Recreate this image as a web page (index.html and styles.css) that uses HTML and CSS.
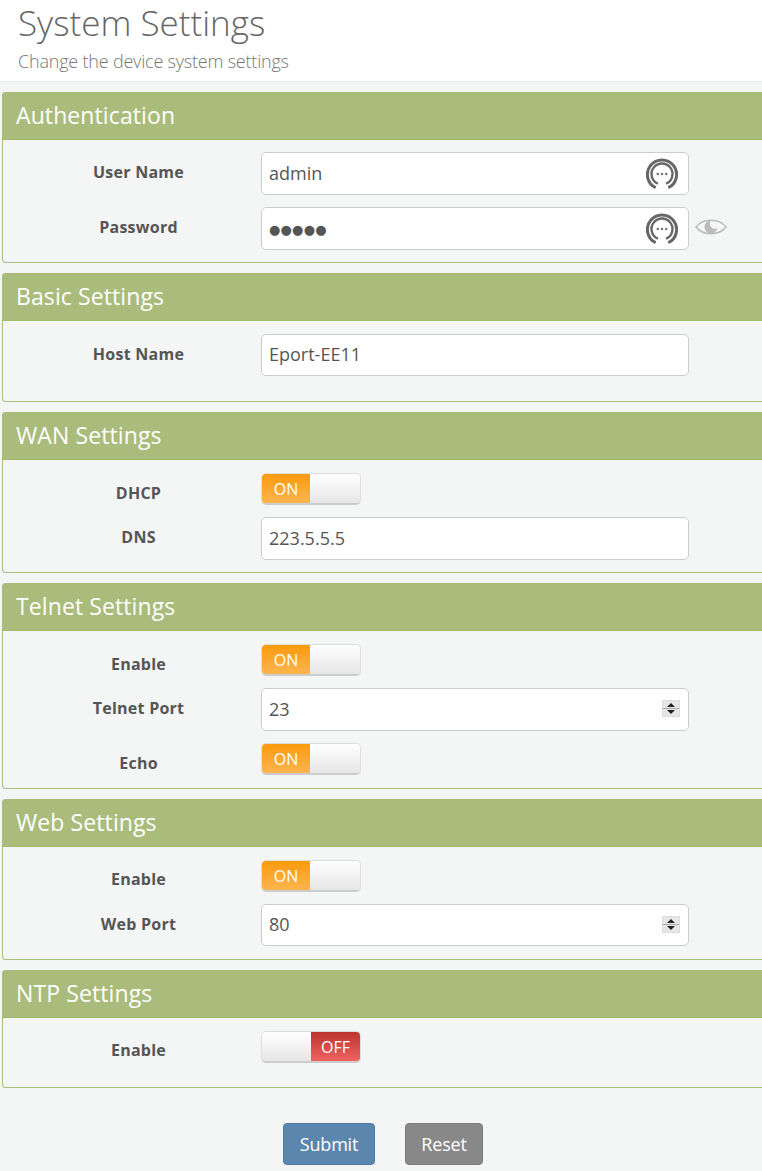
FILE: index.html
```html
<!DOCTYPE html>
<html lang="en">
<head>
<meta charset="utf-8">
<title>System Settings</title>
<link rel="stylesheet" href="styles.css">
</head>
<body>
<svg class="defs" width="0" height="0" aria-hidden="true">
  <symbol id="keyring" viewBox="0 0 32 32">
    <path d="M9.700 29.700A14.600 14.600 0 1 1 22.300 29.700" fill="none" stroke="#666" stroke-width="3"/>
    <path d="M12 25.700A10.500 10.500 0 1 1 20 25.700" fill="none" stroke="#666" stroke-width="2.400"/>
    <circle cx="11.800" cy="16" r="1.300" fill="#777"/><circle cx="16" cy="16" r="1.300" fill="#777"/><circle cx="20.200" cy="16" r="1.300" fill="#777"/>
  </symbol>
</svg>
<header class="page-head">
  <h1>System Settings</h1>
  <p>Change the device system settings</p>
</header>
<main class="content">
  <section class="card">
    <h2>Authentication</h2>
    <div class="rows rows-tight">
      <div class="row"><label>User Name</label><div class="field"><span>admin</span><svg class="key"><use href="#keyring"/></svg></div></div>
      <div class="row"><label>Password</label><div class="field"><span class="dots">●●●●●</span><svg class="key"><use href="#keyring"/></svg></div>
        <svg class="eye" viewBox="0 0 32 20"><path d="M1 10C8 1 24 1 31 10C24 19 8 19 1 10Z" fill="none" stroke="#bbb" stroke-width="1.500"/><path d="M16 3.500a6.500 6.500 0 1 0 6.400 7.500a5 5 0 0 1-6.400-7.500Z" fill="#bbb"/></svg></div>
    </div>
  </section>
  <section class="card card-basic">
    <h2>Basic Settings</h2>
    <div class="rows">
      <div class="row row-short"><label>Host Name</label><div class="field"><span>Eport-EE11</span></div></div>
    </div>
  </section>
  <section class="card">
    <h2>WAN Settings</h2>
    <div class="rows">
      <div class="row row-switch"><label>DHCP</label><div class="switch"><span class="on">ON</span><span class="knob"></span></div></div>
      <div class="row"><label>DNS</label><div class="field"><span>223.5.5.5</span></div></div>
    </div>
  </section>
  <section class="card card-tall">
    <h2>Telnet Settings</h2>
    <div class="rows">
      <div class="row row-switch"><label>Enable</label><div class="switch"><span class="on">ON</span><span class="knob"></span></div></div>
      <div class="row"><label>Telnet Port</label><div class="field"><span>23</span><div class="spin"><i class="up"></i><i class="down"></i></div></div></div>
      <div class="row row-switch"><label>Echo</label><div class="switch"><span class="on">ON</span><span class="knob"></span></div></div>
    </div>
  </section>
  <section class="card card-tall">
    <h2>Web Settings</h2>
    <div class="rows">
      <div class="row row-switch row-raised"><label>Enable</label><div class="switch"><span class="on">ON</span><span class="knob"></span></div></div>
      <div class="row row-short"><label>Web Port</label><div class="field"><span>80</span><div class="spin"><i class="up"></i><i class="down"></i></div></div></div>
    </div>
  </section>
  <section class="card card-ntp">
    <h2>NTP Settings</h2>
    <div class="rows">
      <div class="row row-switch row-raised"><label>Enable</label><div class="switch"><span class="knob"></span><span class="off">OFF</span></div></div>
    </div>
  </section>
  <div class="actions">
    <button class="btn submit" type="button">Submit</button>
    <button class="btn reset" type="button">Reset</button>
  </div>
</main>
</body>
</html>
```
FILE: styles.css
```css
* { box-sizing: border-box; }
html, body { margin: 0; padding: 0; }
body {
  width: 762px;
  height: 1171px;
  overflow: hidden;
  background: #f4f6f6;
  font-family: "Open Sans", "Noto Sans", sans-serif;
  color: #555;
}
.defs { position: absolute; }
.page-head {
  height: 82px;
  background: #fff;
  border-bottom: 1px solid #e8eaea;
  padding-left: 18px;
}
.page-head h1 {
  margin: 0;
  height: 47px;
  font-size: 35px;
  line-height: 45px;
  font-weight: 300;
  color: #666;
}
.page-head p {
  margin: 0;
  font-size: 18px;
  line-height: 28px;
  font-weight: 300;
  color: #777;
  letter-spacing: -0.2px;
}
.content { padding: 10px 0 0 2px; }
.card {
  width: 762px;
  margin-bottom: 10px;
  border-left: 1px solid #a9bf7b;
  border-bottom: 1px solid #a9bf7b;
  border-radius: 4px 0 0 4px;
  padding-bottom: 12px;
}
.card-basic { padding-bottom: 25px; }
.card-tall { padding-bottom: 13px; }
.card-ntp { padding-bottom: 24px; }
.card h2 {
  margin: 0 0 0 -1px;
  height: 48px;
  background: #a9bc7b;
  border-bottom: 1px solid #a3b96f;
  border-radius: 4px 0 0 0;
  color: #fff;
  padding-left: 14px;
  font-size: 23px;
  line-height: 46px;
  font-weight: 400;
  letter-spacing: 0.1px;
}
.rows {
  display: flex;
  flex-direction: column;
  gap: 12px;
  padding-top: 13px;
}
.rows-tight { padding-top: 12px; }
.row {
  display: flex;
  align-items: center;
}
.row label {
  flex: none;
  width: 273px;
  margin: 0 -14px 0 -1px;
  padding-bottom: 4px;
  text-align: center;
  font-size: 16px;
  font-weight: 700;
  color: #555;
  letter-spacing: 0.25px;
}
.row-short label { padding-bottom: 2px; }
.row-switch label { padding: 8px 0 0; }
.row-raised label { padding: 6px 0 0; }
.field {
  flex: none;
  width: 428px;
  height: 43px;
  padding: 0 8px 2px 7px;
  background: #fff;
  border: 1px solid #ccc;
  border-radius: 5px;
  display: flex;
  align-items: center;
  justify-content: space-between;
  font-size: 18px;
  color: #555;
}
.row-short .field { height: 42px; }
.dots { padding-top: 3px; font-size: 13px; letter-spacing: 0.2px; font-family: "DejaVu Sans", sans-serif; }
.key { width: 32px; height: 32px; margin: 2px 2px 0 0; }
.eye { flex: none; width: 32px; height: 20px; margin: 0 0 4px 6px; }
.spin {
  position: relative;
  width: 18px;
  height: 17px;
  background: #e6e6e6;
  border: 1px solid #ddd;
  display: flex;
  flex-direction: column;
  align-items: center;
  justify-content: space-between;
  padding: 2px 0;
}
.spin::after {
  content: "";
  position: absolute;
  left: 0; right: 0; top: 7px;
  height: 1px;
  background: #aaa;
}
.spin i { width: 0; height: 0; border-left: 4px solid transparent; border-right: 4px solid transparent; }
.spin .up { border-bottom: 4px solid #222; }
.spin .down { border-top: 4px solid #222; }
.switch {
  flex: none;
  width: 100px;
  height: 32px;
  display: flex;
  border-radius: 5px;
  overflow: hidden;
  border: 1px solid #ddd;
  border-bottom: 2px solid #ccc;
  font-size: 16px;
  color: #fff;
}
.switch span { display: flex; align-items: center; justify-content: center; height: 100%; }
.on { width: 48px; background: linear-gradient(#fb9a0e, #fdb54e); }
.off { width: 49px; background: linear-gradient(#bd342e, #ee6360); }
.knob { flex: 1; background: linear-gradient(#fff, #e6e6e6); }
.actions {
  display: flex;
  justify-content: center;
  gap: 30px;
  margin-left: -2px;
  padding: 25px 0 0 4px;
}
.btn {
  height: 42px;
  padding: 0;
  border-radius: 4px;
  color: #fff;
  font-family: inherit;
  font-size: 18px;
  letter-spacing: -0.2px;
}
.submit { width: 92px; background: #5b86ae; border: 1px solid #4f7aa3; }
.reset { width: 78px; background: #888; border: 1px solid #7c7c7c; }
```
